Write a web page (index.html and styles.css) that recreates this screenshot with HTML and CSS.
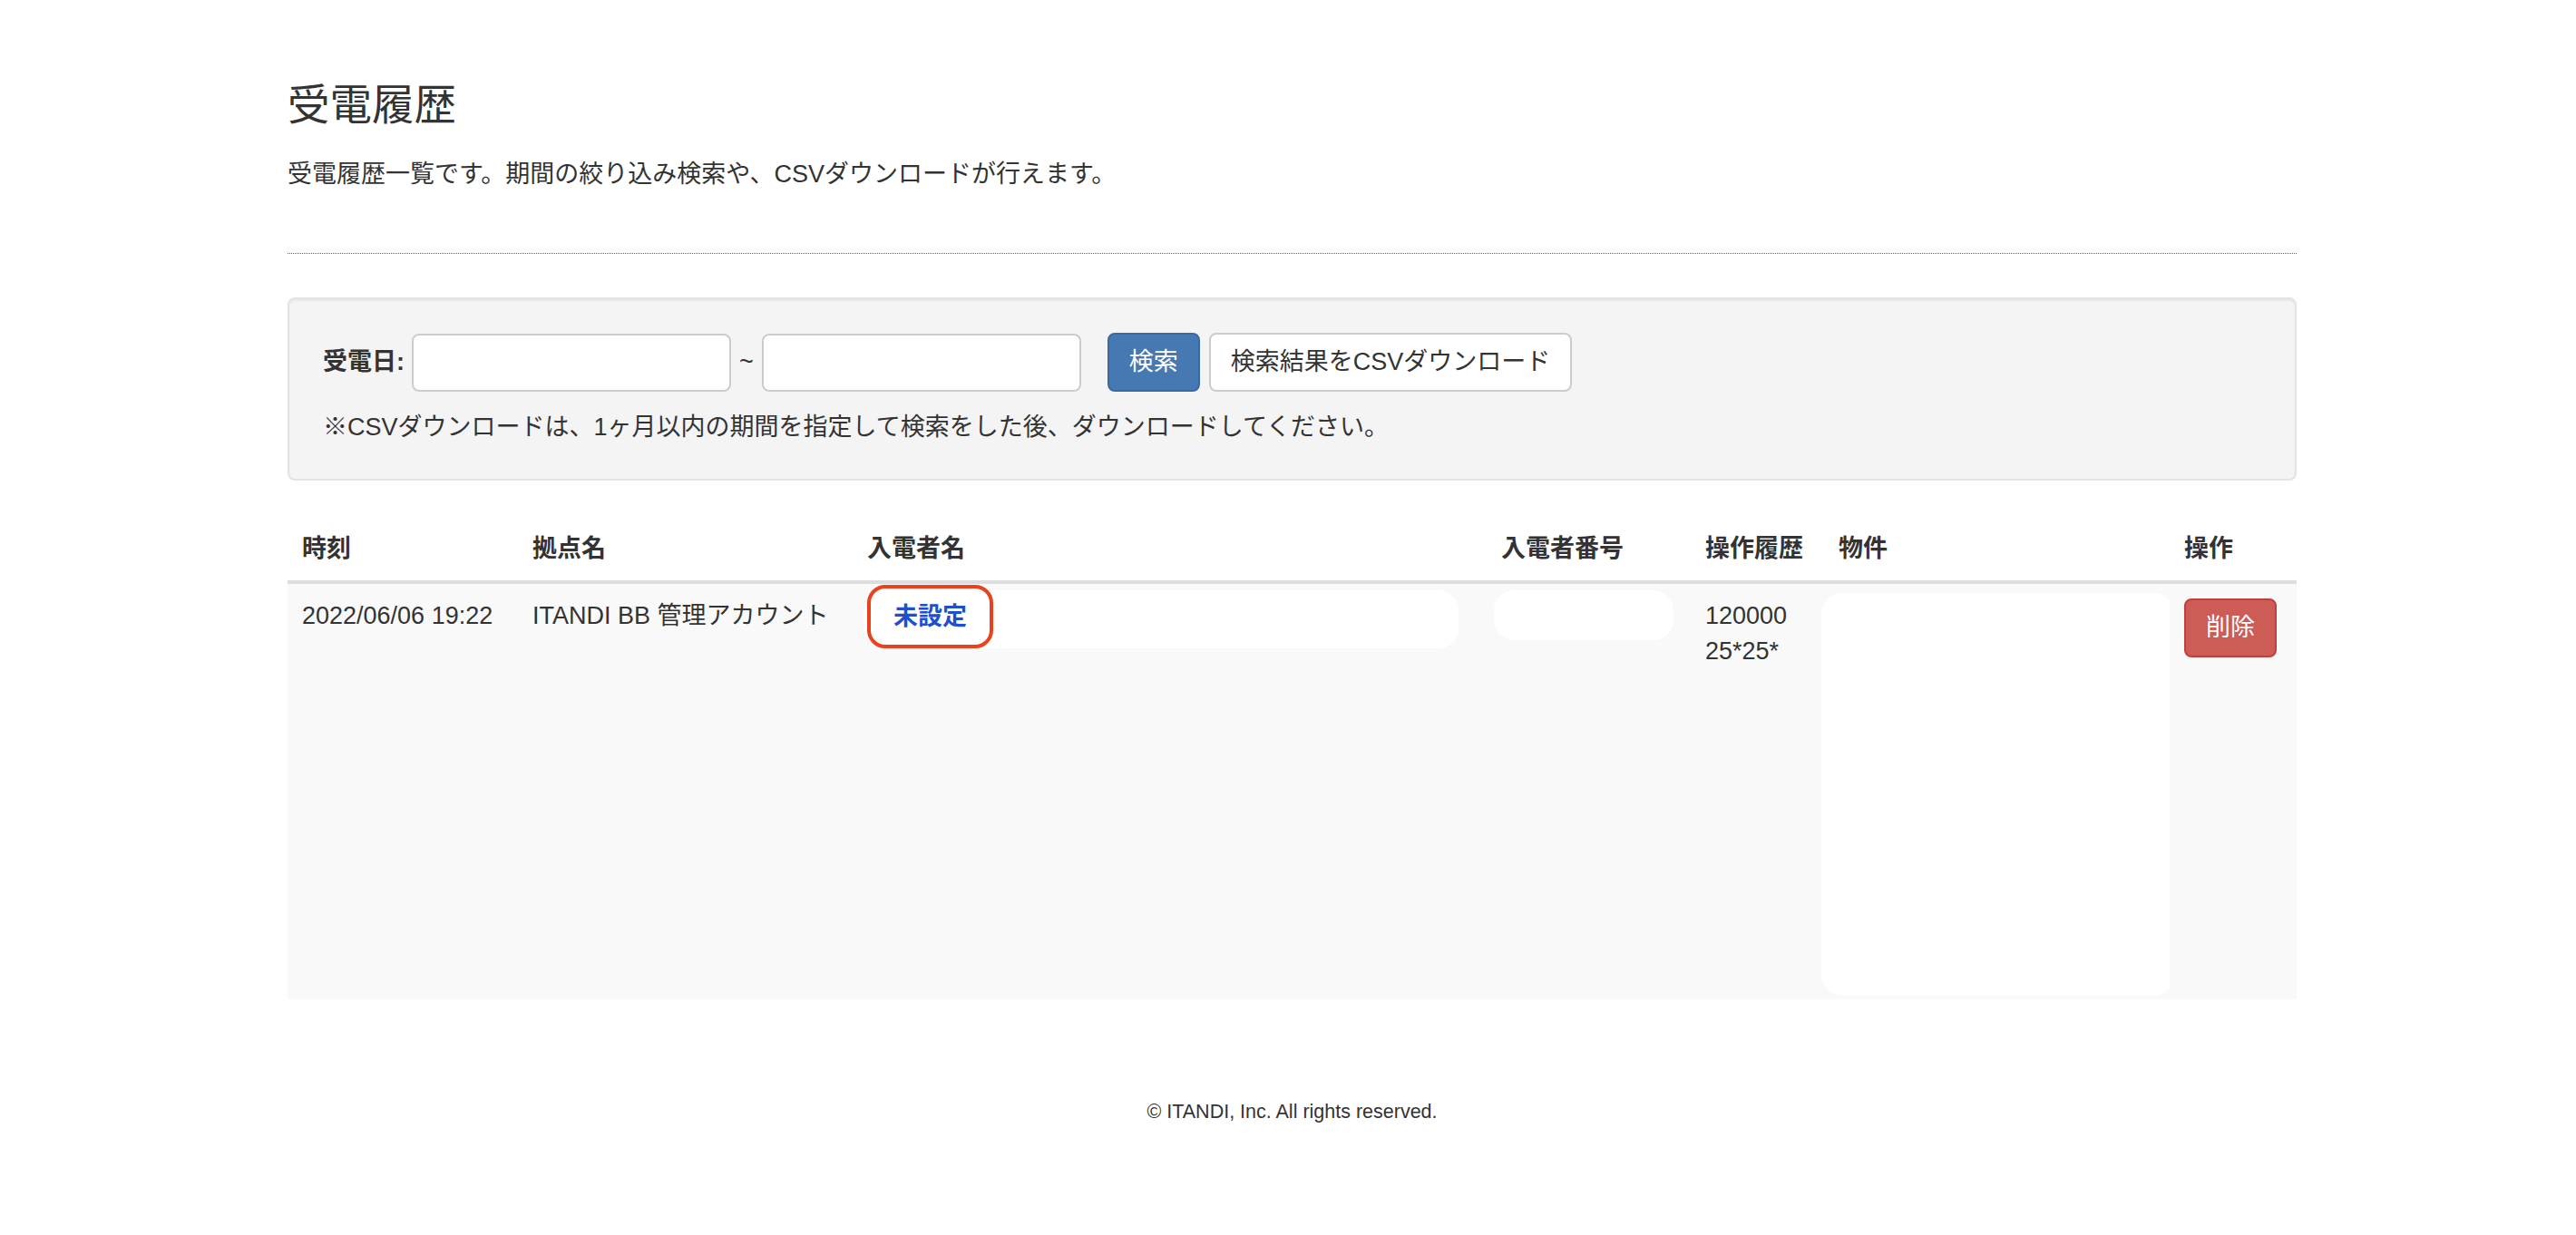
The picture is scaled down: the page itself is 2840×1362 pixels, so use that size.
FILE: index.html
```html
<!DOCTYPE html>
<html lang="ja">

<head>
  <meta charset="utf-8">
  <title>受電履歴</title>
  <link rel="stylesheet" href="styles.css">
</head>

<body>
  <main class="container">
    <header class="page-header">
      <h3>受電履歴</h3>
      <p>受電履歴一覧です。期間の絞り込み検索や、CSVダウンロードが行えます。</p>
    </header>

    <section class="well">
      <form class="search-form">
        <label for="from">受電日:</label>
        <input type="text" id="from">
        <span class="tilde">~</span>
        <input type="text" id="to">
        <button type="button" class="btn btn-primary">検索</button>
        <button type="button" class="btn btn-default">検索結果をCSVダウンロード</button>
      </form>
      <p class="note">※CSVダウンロードは、1ヶ月以内の期間を指定して検索をした後、ダウンロードしてください。</p>
    </section>

    <table class="calls">
      <colgroup>
        <col style="width: 254px">
        <col style="width: 369px">
        <col style="width: 699px">
        <col style="width: 225px">
        <col style="width: 147px">
        <col style="width: 381px">
        <col style="width: 140px">
      </colgroup>
      <thead>
        <tr>
          <th>時刻</th>
          <th>拠点名</th>
          <th>入電者名</th>
          <th>入電者番号</th>
          <th>操作履歴</th>
          <th>物件</th>
          <th>操作</th>
        </tr>
      </thead>
      <tbody>
        <tr>
          <td>2022/06/06 19:22</td>
          <td>ITANDI BB 管理アカウント</td>
          <td class="caller">
            <div class="mask mask-name">
              <a href="#" class="unset">未設定</a>
            </div>
          </td>
          <td class="number">
            <div class="mask mask-number"></div>
          </td>
          <td>120000 25*25*</td>
          <td class="property">
            <div class="mask mask-property"></div>
          </td>
          <td><button type="button" class="btn btn-danger">削除</button></td>
        </tr>
      </tbody>
    </table>

    <footer class="footer">© ITANDI, Inc. All rights reserved.</footer>
  </main>
</body>

</html>
```

FILE: styles.css
```css
body {
  margin: 0;
  background: #fff;
  color: #333;
  font-family: "Liberation Sans", "Noto Sans CJK JP", sans-serif;
  font-size: 27px;
  line-height: 39px;
}

.container {
  width: 2215px;
  margin-left: 317px;
  padding-top: 91px;
}

/* 見出し */
.page-header {
  padding-bottom: 67px;
  border-bottom: 1px dotted #666;
}

.page-header h3 {
  margin: 0;
  font-size: 46.5px;
  font-weight: normal;
  line-height: 51px;
}

.page-header p {
  margin: 31px 0 0;
}

/* 検索 */
.well {
  margin-top: 48px;
  padding: 37px;
  background: #f4f4f4;
  border: 2px solid #e3e3e3;
  border-radius: 8px;
  box-shadow: inset 0 2px 2px rgba(0, 0, 0, .05);
}

.search-form {
  display: flex;
  align-items: center;
}

.search-form label {
  font-weight: bold;
  margin-right: 8px;
}

.search-form input {
  box-sizing: border-box;
  width: 352px;
  height: 64px;
  padding: 0 20px;
  background: #fff;
  border: 2px solid #ccc;
  border-radius: 8px;
  font: inherit;
}

.tilde {
  margin: 0 9px;
}

.btn {
  box-sizing: border-box;
  padding: 11px 22px;
  border: 2px solid transparent;
  border-radius: 8px;
  font: inherit;
  line-height: 39px;
  cursor: pointer;
}

.btn-primary {
  margin-left: 29px;
  background: #4678b2;
  border-color: #3a69a3;
  color: #fff;
}

.btn-default {
  margin-left: 10px;
  background: #fff;
  border-color: #ccc;
  color: #333;
}

.btn-danger {
  background: #cd5b56;
  border-color: #c0403b;
  color: #fff;
}

.note {
  margin: 20px 0 0;
}

/* 一覧 */
table.calls {
  width: 100%;
  margin-top: 40px;
  border-collapse: collapse;
  table-layout: fixed;
}

.calls th {
  padding: 15.5px 16px;
  text-align: left;
  font-weight: bold;
  border-bottom: 4px solid #ddd;
}

.calls td {
  padding: 15.5px 16px;
  vertical-align: top;
  background: #f9f9f9;
}

.mask {
  background: #fff;
  border-radius: 22px;
}

.calls td.caller {
  padding: 7px 0 0 13px;
}

.mask-name {
  display: flex;
  width: 655px;
  height: 64px;
}

.unset {
  box-sizing: border-box;
  width: 139px;
  height: 70px;
  margin: -6px 0 0 3px;
  border: 4px solid #e8431e;
  border-radius: 20px;
  color: #1f4fd0;
  font-weight: bold;
  line-height: 62px;
  text-align: center;
  text-decoration: none;
}

.calls td.number {
  padding: 7px 0 0 8px;
}

.mask-number {
  width: 198px;
  height: 55px;
}

.calls td.property {
  padding: 10px 0 4px;
}

.mask-property {
  height: 444px;
  margin: 0 -6px 0 -3px;
  border-radius: 24px;
}

.footer {
  margin-top: 108px;
  text-align: center;
  font-size: 21.5px;
  line-height: 33px;
}
```
